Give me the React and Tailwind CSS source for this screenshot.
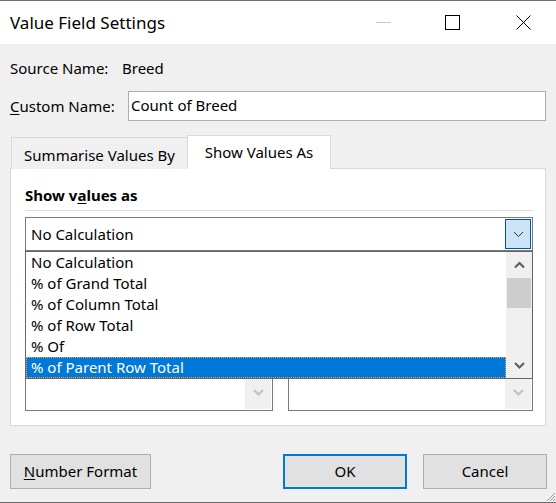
import React from 'react';

const font = { fontFamily: '"Segoe UI", "Noto Sans", "Open Sans", sans-serif' };

function Chevron({ dir = 'down', className = '', thick = false }) {
  const d = dir === 'down' ? 'M1 2 L5.5 6.5 L10 2' : 'M1 6.5 L5.5 2 L10 6.5';
  return (
    <svg width="11" height="9" viewBox="0 0 11 9" className={className}>
      <path d={d} fill="none" stroke="currentColor" strokeWidth={thick ? 2.2 : 1} />
    </svg>
  );
}

function Combo({ className = '' }) {
  return (
    <div className={`h-[52px] border border-[#7a7a7a] bg-white flex items-end justify-end p-[1px] ${className}`}>
      <div className="w-[26px] h-[33px] bg-[#f0f0f0] flex items-center justify-center text-[#c0c0c0]">
        <Chevron thick />
      </div>
    </div>
  );
}

const items = [
  'No Calculation',
  '% of Grand Total',
  '% of Column Total',
  '% of Row Total',
  '% Of',
  '% of Parent Row Total',
];

export default function App() {
  return (
    <div
      className="w-[556px] h-[503px] bg-[#f0f0f0] relative overflow-hidden text-[15px] text-black border-b border-[#6b6b6b]"
      style={font}
    >
      {/* title bar */}
      <div className="h-[44px] bg-white border-t border-[#707070] flex items-center">
        <div className="pl-[10px] text-[17px] flex-1">Value Field Settings</div>
        <div className="w-[15px] h-[1px] bg-[#c8c8c8] mr-[54px]"></div>
        <div className="w-[15px] h-[15px] border border-black mr-[56px]"></div>
        <svg width="15" height="15" viewBox="0 0 15 15" className="mr-[25px]">
          <path d="M0.5 0.5 L14.5 14.5 M14.5 0.5 L0.5 14.5" stroke="black" strokeWidth="1" />
        </svg>
      </div>

      <div className="px-[10px]">
        <div className="h-[24px] mt-[12px] flex items-center">
          <span className="w-[112px]">Source Name:</span>
          <span>Breed</span>
        </div>
        <div className="mt-[11px] flex items-center h-[30px]">
          <span className="w-[118px]">
            <span className="underline underline-offset-2">C</span>ustom Name:
          </span>
          <div className="flex-1 h-[30px] border border-[#adadad] bg-white flex items-center pl-[2px] pb-[2px]">
            Count of Breed
          </div>
        </div>

        {/* tabs */}
        <div className="mt-[14px] flex items-end h-[34px] relative z-10">
          <div className="w-[177px] ml-[1px] h-[32px] border border-b-0 border-[#d9d9d9] bg-[#f0f0f0] flex items-center justify-center pt-[3px]">
            Summarise Values By
          </div>
          <div className="w-[144px] h-[34px] -ml-[1px] border border-b-0 border-[#d9d9d9] bg-white flex items-center justify-center">
            Show Values As
          </div>
        </div>

        {/* panel */}
        <div className="-mt-[1px] h-[258px] border border-[#d9d9d9] bg-white pl-[14px] pr-[12px] relative">
          <div className="h-[37px] flex items-end font-bold">
            Show v<span className="underline underline-offset-2">a</span>lues as
          </div>
          <div className="mt-[4px] h-[1px] bg-[#dcdcdc]"></div>
          <div className="mt-[6px] h-[34px] border border-[#7a7a7a] flex items-center justify-between pl-[5px] pr-[1px]">
            <span>No Calculation</span>
            <div className="w-[26px] h-[30px] bg-[#cce4f7] border border-[#005499] flex items-center justify-center text-[#333]">
              <Chevron />
            </div>
          </div>

          <div className="mt-[108px] flex gap-[15px]">
            <Combo className="w-[248px]" />
            <Combo className="flex-1" />
          </div>

          {/* open dropdown list */}
          <div className="absolute left-[14px] right-[12px] top-[82px] h-[128px] border border-[#646464] bg-white flex">
            <div className="flex-1 flex flex-col">
              {items.map((it, i) =>
                i === items.length - 1 ? (
                  <div
                    key={it}
                    className="h-[21px] bg-[#0078d7] text-white border border-dotted border-[#f7a04a] pl-[4px] flex items-center leading-none"
                  >
                    {it}
                  </div>
                ) : (
                  <div key={it} className="h-[21px] pl-[5px] flex items-center leading-none">
                    {it}
                  </div>
                )
              )}
            </div>
            <div className="w-[26px] bg-[#f0f0f0] flex flex-col items-center text-[#606060]">
              <div className="h-[26px] flex items-center justify-center">
                <Chevron dir="up" thick />
              </div>
              <div className="w-[24px] h-[30px] bg-[#cdcdcd]"></div>
              <div className="flex-1"></div>
              <div className="h-[26px] flex items-center justify-center">
                <Chevron thick />
              </div>
            </div>
          </div>
        </div>

        {/* buttons */}
        <div className="mt-[28px] flex items-center">
          <button className="w-[141px] h-[35px] bg-[#e1e1e1] border border-[#adadad] flex items-center justify-center">
            <span className="underline underline-offset-2">N</span>umber Format
          </button>
          <div className="flex-1"></div>
          <button className="w-[124px] h-[35px] bg-[#e1e1e1] border-2 border-[#0078d7]">OK</button>
          <button className="w-[124px] h-[35px] ml-[16px] mr-[-1px] bg-[#e1e1e1] border border-[#adadad]">Cancel</button>
        </div>
      </div>

      {/* size grip */}
      <svg width="12" height="12" viewBox="0 0 12 12" className="absolute right-0 bottom-0">
        <path d="M11 3 L3 11 M11 6 L6 11 M11 9 L9 11" stroke="#9a9a9a" strokeWidth="1" />
      </svg>
    </div>
  );
}
